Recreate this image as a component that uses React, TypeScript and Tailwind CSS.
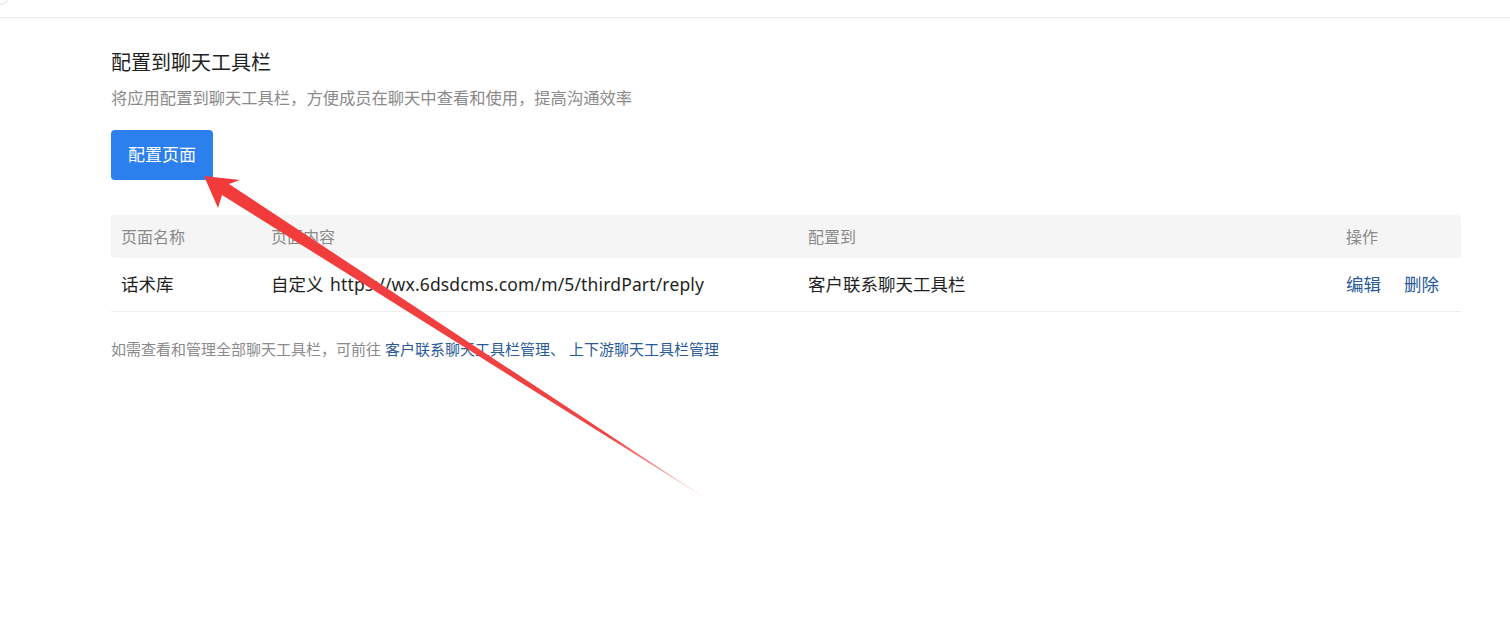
import React from 'react';

const font = { fontFamily: '"Noto Sans", "Noto Sans CJK SC", sans-serif' };

const App: React.FC = () => {
  return (
    <div className="relative w-[1510px] h-[640px] bg-white overflow-hidden" style={font}>
      {/* top strip */}
      <div className="h-[18px] border-b border-[#e8e8e8] overflow-hidden">
        <div className="w-[26px] h-[26px] rounded-full border border-[#dcdcdc] -mt-[21px] -ml-[14px]" />
      </div>

      <div className="pl-[111px] pr-[49px] pt-[30px]">
        <h2 className="text-[20px] leading-[30px] text-[#1f1f1f]">配置到聊天工具栏</h2>
        <p className="mt-[8px] text-[16.3px] leading-[24px] text-[#8a8a8a]">
          将应用配置到聊天工具栏，方便成员在聊天中查看和使用，提高沟通效率
        </p>
        <button className="mt-[20px] w-[102px] h-[50px] rounded-[4px] bg-[#2b80ee] text-white text-[17px]">
          配置页面
        </button>

        {/* table */}
        <div className="mt-[35px]">
          <div className="grid grid-cols-[150px_537px_538px_1fr] h-[43px] items-center bg-[#f5f5f5] rounded-[4px] text-[16px] text-[#8a8a8a]">
            <div className="px-[10px]">页面名称</div>
            <div className="px-[10px]">页面内容</div>
            <div className="px-[10px]">配置到</div>
            <div className="px-[10px]">操作</div>
          </div>
          <div className="grid grid-cols-[150px_537px_538px_1fr] h-[54px] items-center border-b border-[#ececec] text-[17.5px] text-[#1f1f1f]">
            <div className="px-[10px]">话术库</div>
            <div className="px-[10px] whitespace-nowrap">
              自定义 <span className="ml-[2px] tracking-[0.15px]">https://wx.6dsdcms.com/m/5/thirdPart/reply</span>
            </div>
            <div className="px-[10px]">客户联系聊天工具栏</div>
            <div className="px-[10px] flex gap-[23px] text-[#2a5a9a]">
              <span>编辑</span>
              <span>删除</span>
            </div>
          </div>
        </div>

        <p className="mt-[26px] text-[15px] leading-[22px] text-[#8a8a8a] whitespace-nowrap">
          如需查看和管理全部聊天工具栏，可前往 <span className="text-[#2a5a9a]">客户联系聊天工具栏管理、</span>
          <span className="ml-[4px] text-[#2a5a9a]">上下游聊天工具栏管理</span>
        </p>
      </div>

      {/* annotation arrow */}
      <svg className="absolute inset-0 pointer-events-none" width="1510" height="640" viewBox="0 0 1510 640">
        <defs>
          <linearGradient id="arrowFade" x1="204" y1="176" x2="708" y2="500" gradientUnits="userSpaceOnUse">
            <stop offset="0" stopColor="#f23a3a" />
            <stop offset="0.8" stopColor="#f04444" />
            <stop offset="1" stopColor="#f04444" stopOpacity="0.15" />
          </linearGradient>
        </defs>
        <polygon
          points="204,176 218,208 222,195 708,500 229,184 240,180"
          fill="url(#arrowFade)"
        />
      </svg>
    </div>
  );
};

export default App;
